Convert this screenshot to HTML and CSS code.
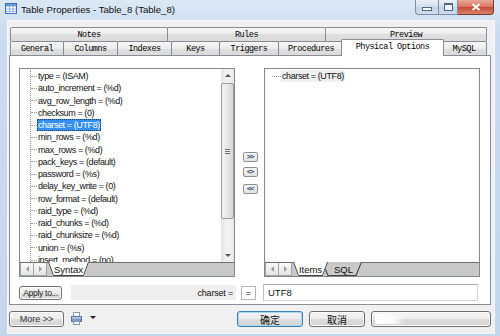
FILE: index.html
```html
<html>
<head>
	<meta charset="UTF-8">
	<link rel="stylesheet" href="styles.css">
</head>

<body>
	<div class="window">
		<div class="titlebar">
			<svg class="app-icon" viewBox="0 0 12 11" width="12" height="11">
				<rect x="0.5" y="0.5" width="11" height="10" fill="#fff" stroke="#3d6fb0"/>
				<rect x="1" y="1" width="10" height="2.5" fill="#6c9bd2"/>
				<path d="M4.5 3.5V10.5M8 3.5V10.5M1 6H11M1 8.3H11" stroke="#8fb2dc" stroke-width="1"/>
			</svg>
			<span class="title">Table Properties - Table_8 (Table_8)</span>
			<div class="caption">
				<div class="cap-btn cap-min"><span></span></div>
				<div class="cap-btn cap-max"><span></span></div>
				<div class="cap-btn cap-close">
					<svg viewBox="0 0 10 8" width="10" height="8">
						<path d="M1.5 1L8.5 7M8.5 1L1.5 7" stroke="#fff" stroke-width="2"/>
					</svg>
				</div>
			</div>
		</div>

		<div class="frame">
			<div class="client">
				<div class="tabstrip">
					<div class="tab-row">
						<div class="tab w-notes">Notes</div>
						<div class="tab w-rules">Rules</div>
						<div class="tab w-fill">Preview</div>
					</div>
					<div class="tab-row">
						<div class="tab w-general">General</div>
						<div class="tab w-columns">Columns</div>
						<div class="tab w-indexes">Indexes</div>
						<div class="tab w-keys">Keys</div>
						<div class="tab w-triggers">Triggers</div>
						<div class="tab w-procs">Procedures</div>
						<div class="tab w-physical active">Physical Options</div>
						<div class="tab w-fill">MySQL</div>
					</div>
				</div>

				<div class="panel">
					<div class="lists">
						<div class="listbox">
							<div class="list-main">
								<div class="tree">
									<ul class="branch">
										<li><span>type = (ISAM)</span></li>
										<li><span>auto_increment = (%d)</span></li>
										<li><span>avg_row_length = (%d)</span></li>
										<li><span>checksum = (0)</span></li>
										<li class="selected"><span>charset = (UTF8)</span></li>
										<li><span>min_rows = (%d)</span></li>
										<li><span>max_rows = (%d)</span></li>
										<li><span>pack_keys = (default)</span></li>
										<li><span>password = (%s)</span></li>
										<li><span>delay_key_write = (0)</span></li>
										<li><span>row_format = (default)</span></li>
										<li><span>raid_type = (%d)</span></li>
										<li><span>raid_chunks = (%d)</span></li>
										<li><span>raid_chunksize = (%d)</span></li>
										<li><span>union = (%s)</span></li>
										<li><span>insert_method = (no)</span></li>
									</ul>
								</div>
								<div class="vscroll">
									<div class="sb-arrow"><i class="tri-up"></i></div>
									<div class="sb-thumb"><div class="grip"></div></div>
									<div class="sb-track"></div>
									<div class="sb-arrow"><i class="tri-down"></i></div>
								</div>
							</div>
							<div class="sheetbar">
								<div class="sheet-nav">
									<div class="nav-btn"><i class="tri-left"></i></div>
									<div class="nav-btn"><i class="tri-right"></i></div>
								</div>
								<div class="sheet-tab w-syntax">
									<svg viewBox="0 0 41 14" preserveAspectRatio="none">
										<path d="M0 0L5 14H36L41 0Z" fill="#fff"/>
										<path d="M0.5 0L5.5 13.5H35.5L40.5 0" fill="none" stroke="#444"/>
									</svg>
									<span>Syntax</span>
								</div>
							</div>
						</div>

						<div class="move-col">
							<div class="mv-btn">&gt;&gt;</div>
							<div class="mv-btn mid">&lt;&gt;</div>
							<div class="mv-btn">&lt;&lt;</div>
						</div>

						<div class="listbox">
							<div class="list-main">
								<div class="tree">
									<ul class="root">
										<li class="picked"><span>charset = (UTF8)</span></li>
									</ul>
								</div>
							</div>
							<div class="sheetbar">
								<div class="sheet-nav">
									<div class="nav-btn"><i class="tri-left"></i></div>
									<div class="nav-btn"><i class="tri-right"></i></div>
								</div>
								<div class="sheet-tab w-items">
									<svg viewBox="0 0 35 14" preserveAspectRatio="none">
										<path d="M0 0L5 14H30L35 0Z" fill="#fff"/>
										<path d="M0.5 0L5.5 13.5H29.5L34.5 0" fill="none" stroke="#444"/>
									</svg>
									<span>Items</span>
								</div>
								<div class="sheet-tab w-sql back">
									<svg viewBox="0 0 37 14" preserveAspectRatio="none">
										<path d="M0 0L5 14H32L37 0Z" fill="#c9c9c9"/>
										<path d="M0.5 0L5.5 13.5H31.5L36.5 0" fill="none" stroke="#444"/>
									</svg>
									<span>SQL</span>
								</div>
							</div>
						</div>
					</div>

					<div class="apply-row">
						<div class="btn btn-apply">Apply to...</div>
						<div class="eq-label">charset =</div>
						<div class="eq-box">=</div>
						<div class="value-input">UTF8</div>
					</div>
				</div>

				<div class="footer">
					<div class="btn btn-more">More &gt;&gt;</div>
					<svg class="printer" viewBox="0 0 11 13" width="11" height="13">
						<rect x="2.5" y="0.5" width="6" height="4" fill="#fff" stroke="#7f96b4"/>
						<rect x="0.5" y="4.5" width="10" height="5" fill="#7e9dc6" stroke="#51729c"/>
						<rect x="1" y="5" width="9" height="1.5" fill="#b9cde6"/>
						<rect x="2.5" y="9.5" width="6" height="3" fill="#fff" stroke="#7f96b4"/>
					</svg>
					<i class="drop"></i>
					<div class="footer-right">
						<div class="btn btn-ok">确定</div>
						<div class="btn btn-cancel">取消</div>
						<div class="btn progress"><div class="progress-fill"></div></div>
					</div>
				</div>
			</div>
		</div>
	</div>
</body>
</html>
```

FILE: styles.css
```css
body {
	margin: 0;
	padding: 0;
	background: #fff;
	font-family: "Liberation Sans", Arial, sans-serif;
}

.window {
	width: 500px;
	height: 336px;
	display: flex;
	flex-direction: column;
	background: linear-gradient(to bottom, #dce8f5 0, #cbdcf0 30px, #c3d6ec 100%);
	overflow: hidden;
}

.titlebar {
	height: 21px;
	flex-shrink: 0;
	display: flex;
	align-items: flex-start;
}

.app-icon {
	margin: 3px 0 0 5px;
}

.title {
	margin: 3px 0 0 4px;
	font-size: 9.6px;
	line-height: 13px;
	color: #111;
}

.caption {
	margin-left: auto;
	margin-right: 6px;
	display: flex;
}

.cap-btn {
	box-sizing: border-box;
	height: 15px;
	border: 1px solid #7d8ea6;
	border-top: none;
	display: flex;
	align-items: center;
	justify-content: center;
	background: linear-gradient(to bottom, #e9f0f8, #d3e0ef 50%, #c2d3e8 50%, #cfdcee);
}

.cap-min {
	width: 24px;
	border-radius: 0 0 0 4px;
}

.cap-min span {
	width: 8px;
	height: 2px;
	margin-top: 4px;
	background: #fff;
	border: 1px solid #4f6580;
}

.cap-max {
	width: 19px;
	border-left: none;
}

.cap-max span {
	width: 7px;
	height: 5px;
	border: 1px solid #4f6580;
	border-top-width: 2px;
	background: #eef3f9;
}

.cap-close {
	width: 36px;
	border-left: none;
	border-color: #7b3430;
	border-radius: 0 0 4px 0;
	background: linear-gradient(to bottom, #e9a998, #d8735f 50%, #c74733 50%, #d8836a);
}

.frame {
	flex: 1;
	display: flex;
	padding: 0 7px 3px 8px;
}

.client {
	flex: 1;
	display: flex;
	flex-direction: column;
	background: #f0f0f0;
	padding: 6px 3px 0 1px;
	box-shadow: 0 0 0 1px #f4f8fc;
}

.tabstrip {
	margin-left: 1px;
	width: 477px;
	display: flex;
	flex-direction: column;
	position: relative;
	z-index: 1;
}

.tab-row {
	display: flex;
	height: 14px;
}

.tab {
	box-sizing: border-box;
	height: 14px;
	flex-shrink: 0;
	margin-right: -1px;
	border: 1px solid #898c95;
	border-bottom: none;
	border-radius: 2px 2px 0 0;
	background: linear-gradient(to bottom, #f6f6f6, #ececec 50%, #e0e0e0 50%, #dadada);
	display: flex;
	align-items: center;
	justify-content: center;
	font-family: "Liberation Mono", "Courier New", monospace;
	font-size: 8.5px;
	letter-spacing: -0.5px;
	color: #000;
}

.w-notes { width: 158px; }
.w-rules { width: 159px; }
.w-general { width: 54px; }
.w-columns { width: 55px; }
.w-indexes { width: 55px; }
.w-keys { width: 49px; }
.w-triggers { width: 60px; }
.w-procs { width: 66px; }
.w-physical { width: 99px; }

.w-fill {
	flex: 1;
	margin-right: 0;
}

.tab.active {
	background: #fff;
	height: 17px;
	margin-top: -2px;
	margin-left: -2px;
	margin-right: -3px;
	width: 103px;
	padding-bottom: 2px;
	position: relative;
	z-index: 2;
}

.panel {
	box-sizing: border-box;
	height: 250px;
	border: 1px solid #898c95;
	background: #fff;
	padding: 12px 10px 3px 9px;
	display: flex;
	flex-direction: column;
}

.lists {
	display: flex;
	height: 209px;
}

.listbox {
	box-sizing: border-box;
	width: 216px;
	border: 1px solid #828790;
	background: #fff;
	display: flex;
	flex-direction: column;
}

.list-main {
	flex: 1;
	min-height: 0;
	display: flex;
	overflow: hidden;
}

.tree {
	flex: 1;
	overflow: hidden;
	padding-left: 10px;
}

.tree ul {
	list-style: none;
	margin: 7px 0 0 0;
	padding: 0;
}

.tree ul.branch {
	border-left: 1px dotted #9a9a9a;
}

.tree ul.root {
	margin-left: -3px;
}

.tree li {
	height: 12.27px;
	display: flex;
	align-items: center;
	white-space: nowrap;
	font-size: 9px;
	letter-spacing: -0.4px;
	color: #111;
}

.tree li:first-child {
	margin-top: -6.1px;
}

.tree li::before {
	content: "";
	width: 6px;
	flex-shrink: 0;
	border-top: 1px dotted #9a9a9a;
}

.tree ul.root li::before {
	width: 9px;
}

.tree li span {
	padding: 0 1px;
	line-height: 12px;
}

.tree li.selected span {
	background: #3390f0;
	color: #fff;
	outline: 1px dotted #1b3f70;
	outline-offset: -1px;
}

.tree li.picked span {
	background: #f0f0f0;
}

.vscroll {
	width: 13px;
	flex-shrink: 0;
	display: flex;
	flex-direction: column;
	background: linear-gradient(to right, #e2e2e2, #f1f1f1 35%, #f1f1f1 65%, #e6e6e6);
}

.sb-arrow {
	height: 13px;
	display: flex;
	align-items: center;
	justify-content: center;
}

.sb-thumb {
	box-sizing: border-box;
	height: 136px;
	margin: 1px 0 0 0;
	border: 1px solid #9b9b9b;
	border-radius: 2px;
	background: linear-gradient(to right, #f4f4f4, #e7e7e7 50%, #d5d5d5);
	display: flex;
	align-items: center;
	justify-content: center;
}

.grip {
	width: 5px;
	height: 5px;
	background: repeating-linear-gradient(to bottom, #6f6f6f 0, #6f6f6f 1px, #f0f0f0 1px, #f0f0f0 2px);
}

.sb-track {
	flex: 1;
}

.tri-up {
	border-left: 3px solid transparent;
	border-right: 3px solid transparent;
	border-bottom: 3px solid #555;
}

.tri-down {
	border-left: 3px solid transparent;
	border-right: 3px solid transparent;
	border-top: 3px solid #555;
}

.tri-left {
	border-top: 3px solid transparent;
	border-bottom: 3px solid transparent;
	border-right: 3px solid #9a9a9a;
}

.tri-right {
	border-top: 3px solid transparent;
	border-bottom: 3px solid transparent;
	border-left: 3px solid #9a9a9a;
}

.sheetbar {
	box-sizing: border-box;
	height: 14px;
	flex-shrink: 0;
	display: flex;
	background: #c9c9c9;
	border-top: 1px solid #6e6e6e;
}

.sheet-nav {
	display: flex;
	width: 28px;
	flex-shrink: 0;
}

.nav-btn {
	box-sizing: border-box;
	width: 14px;
	height: 13px;
	border: 1px solid #a3a3a3;
	border-top: none;
	margin-right: -1px;
	background: linear-gradient(to bottom, #fafafa, #e4e4e4);
	display: flex;
	align-items: center;
	justify-content: center;
}

.sheet-tab {
	position: relative;
	z-index: 2;
	height: 14px;
	margin-top: -1px;
	flex-shrink: 0;
	display: flex;
	align-items: center;
	justify-content: center;
	font-size: 9.5px;
	color: #111;
}

.sheet-tab svg {
	position: absolute;
	left: 0;
	top: 0;
	width: 100%;
	height: 100%;
}

.sheet-tab span {
	position: relative;
	padding-top: 1px;
}

.sheet-tab.back {
	z-index: 1;
	margin-left: -6px;
	padding-left: 3px;
}

.w-syntax { width: 41px; }
.w-items { width: 35px; }
.w-sql { width: 37px; }

.move-col {
	width: 28px;
	flex-shrink: 0;
	display: flex;
	flex-direction: column;
	align-items: center;
	justify-content: center;
	padding-left: 1px;
}

.mv-btn {
	box-sizing: border-box;
	width: 15px;
	height: 10px;
	border: 1px solid #8e8f8f;
	border-radius: 2px;
	background: linear-gradient(to bottom, #f7f7f7, #e2e2e2);
	display: flex;
	align-items: center;
	justify-content: center;
	font-family: "DejaVu Sans Mono", monospace;
	font-size: 7.5px;
	font-weight: bold;
	letter-spacing: -1.3px;
	line-height: 8px;
	color: #2c3f5c;
}

.mv-btn.mid {
	margin: 5px 0 7px 0;
}

.apply-row {
	display: flex;
	align-items: center;
	margin-top: 7px;
	height: 17px;
}

.btn {
	box-sizing: border-box;
	border: 1px solid #707070;
	border-radius: 3px;
	background: linear-gradient(to bottom, #f4f4f4, #ececec 50%, #dedede 50%, #d3d3d3);
	box-shadow: inset 0 0 0 1px #fbfbfb;
	display: flex;
	align-items: center;
	justify-content: center;
	color: #222;
	flex-shrink: 0;
}

.btn-apply {
	width: 43px;
	height: 14px;
	font-size: 8.5px;
	letter-spacing: -0.3px;
}

.eq-label {
	box-sizing: border-box;
	margin-left: 9px;
	width: 165px;
	height: 15px;
	background: #efefef;
	padding-right: 3px;
	display: flex;
	align-items: center;
	justify-content: flex-end;
	font-size: 9px;
	letter-spacing: -0.2px;
	color: #111;
}

.eq-box {
	box-sizing: border-box;
	margin-left: 5px;
	width: 15px;
	height: 14px;
	border: 1px solid #b5b5b5;
	display: flex;
	align-items: center;
	justify-content: center;
	font-size: 9px;
}

.value-input {
	box-sizing: border-box;
	margin-left: 7px;
	width: 215px;
	height: 17px;
	border: 1px solid #d2d2d2;
	border-top-color: #abadb3;
	border-left-color: #c0c0c0;
	padding-left: 4px;
	display: flex;
	align-items: center;
	font-size: 9.5px;
	color: #111;
}

.footer {
	display: flex;
	align-items: flex-start;
	padding-top: 6px;
}

.btn-more {
	width: 55px;
	height: 16px;
	font-size: 9px;
	color: #333;
}

.printer {
	margin: 1px 0 0 7px;
}

.drop {
	margin: 5px 0 0 8px;
	border-left: 3px solid transparent;
	border-right: 3px solid transparent;
	border-top: 3px solid #222;
}

.footer-right {
	margin-left: auto;
	display: flex;
	gap: 6px;
}

.btn-ok {
	width: 66px;
	height: 16px;
	border-color: #3c7fb1;
	box-shadow: inset 0 0 0 1px #a6d8f2;
	font-family: "Noto Sans CJK SC", sans-serif;
	font-size: 10px;
	color: #111;
}

.btn-cancel {
	width: 56px;
	height: 16px;
	font-family: "Noto Sans CJK SC", sans-serif;
	font-size: 10px;
	color: #111;
}

.progress {
	width: 120px;
	height: 16px;
	justify-content: flex-start;
	padding: 2px 3px;
}

.progress-fill {
	width: 30px;
	height: 100%;
	border-radius: 1px;
	background: linear-gradient(to right, #fff, #fafafa 60%, rgba(255, 255, 255, 0));
}
```
